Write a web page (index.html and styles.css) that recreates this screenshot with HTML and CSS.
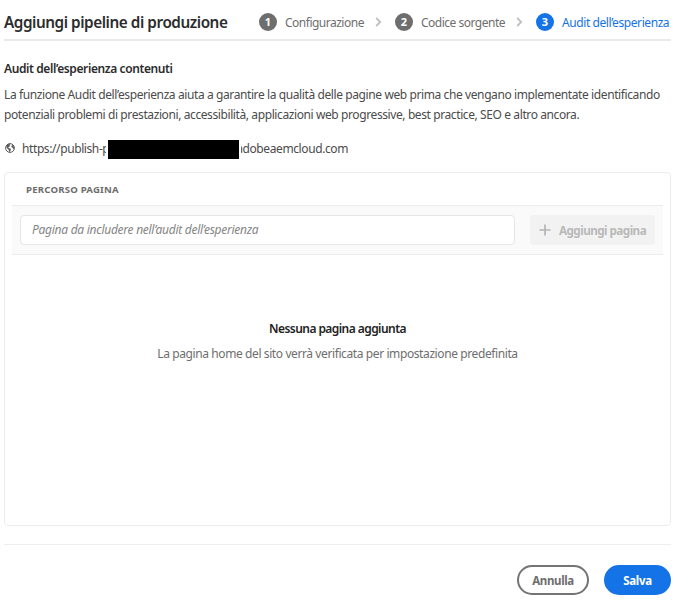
FILE: index.html
```
<!DOCTYPE html>
<html lang="it">
<head>
<meta charset="utf-8">
<title>Aggiungi pipeline di produzione</title>
<link rel="stylesheet" href="styles.css">
</head>
<body>
<main class="dialog">
  <header class="header">
    <h1 class="title">Aggiungi pipeline di produzione</h1>
    <ol class="steps">
      <li class="step step-one"><span class="badge">1</span><span class="label">Configurazione</span></li>
      <li class="chevron"><svg width="7" height="10" viewBox="0 0 7 10"><path d="M1.2 1 5.2 5 1.2 9"/></svg></li>
      <li class="step step-two"><span class="badge">2</span><span class="label">Codice sorgente</span></li>
      <li class="chevron"><svg width="7" height="10" viewBox="0 0 7 10"><path d="M1.2 1 5.2 5 1.2 9"/></svg></li>
      <li class="step active"><span class="badge">3</span><span class="label">Audit dell’esperienza</span></li>
    </ol>
  </header>
  <h2 class="subtitle">Audit dell’esperienza contenuti</h2>
  <p class="intro">La funzione Audit dell’esperienza aiuta a garantire la qualità delle pagine web prima che vengano implementate identificando<br>potenziali problemi di prestazioni, accessibilità, applicazioni web progressive, best practice, SEO e altro ancora.</p>
  <div class="url">
    <svg class="globe" width="10" height="10" viewBox="0 0 10 10"><circle cx="5" cy="5" r="4.4"/><path d="M1.2 2.8 2.4 1.3 4.6.9 5.4 2 4.3 3 4.5 4 3.1 4.3 3.9 5.2 5.6 5.6 5.9 6.8 4.8 8.9 4 8.6 3.7 6.8 2.2 5.6 1.6 4.2ZM6.6 1.2 8.6 2.9 9.2 5 8.4 6.4 7.7 4.8 6.5 4.2 6.3 3 7.2 2.3Z"/></svg>
    <span class="url-start">https://publish-p</span><span class="redacted"></span><span class="url-end"><span>adobeaemcloud.com</span></span>
  </div>
  <section class="panel">
    <div class="panel-head">Percorso pagina</div>
    <div class="add-row">
      <div class="field">Pagina da includere nell’audit dell’esperienza</div>
      <div class="add-button"><svg width="12" height="12" viewBox="0 0 12 12"><path d="M6 .5v11M.5 6h11"/></svg><span>Aggiungi pagina</span></div>
    </div>
    <div class="empty">
      <div class="empty-title">Nessuna pagina aggiunta</div>
      <div class="empty-text">La pagina home del sito verrà verificata per impostazione predefinita</div>
    </div>
  </section>
  <footer class="footer">
    <button class="button">Annulla</button>
    <button class="button primary">Salva</button>
  </footer>
</main>
</body>
</html>
```
FILE: styles.css
```
* { box-sizing: border-box; }
body {
  margin: 0;
  background: #fff;
  color: #4b4b4b;
  font: 12px/19px "Noto Sans", sans-serif;
  letter-spacing: -0.4px;
  white-space: nowrap;
}
.dialog { width: 667px; margin-left: 4px; }
.header {
  display: flex;
  justify-content: space-between;
  height: 41px;
  padding-top: 5px;
  border-bottom: 2px solid #eaeaea;
  align-items: center;
}
.title { margin: 0; font-size: 15.3px; font-weight: 600; letter-spacing: -0.45px; color: #2c2c2c; }
.steps { display: flex; align-items: center; margin: 0; padding: 0; list-style: none; }
.step { display: flex; align-items: center; gap: 8px; color: #6e6e6e; letter-spacing: -0.5px; }
.step-one { width: 105px; }
.step-two { width: 110px; }
.badge {
  flex: none;
  width: 18px;
  height: 18px;
  border-radius: 50%;
  background: #6e6e6e;
  color: #fff;
  font-size: 11px;
  font-weight: 700;
  line-height: 18px;
  text-align: center;
  letter-spacing: 0;
}
.active { width: 135px; color: #1473e6; letter-spacing: -0.42px; }
.active .badge { background: #1473e6; }
.chevron { display: flex; justify-content: center; width: 31px; padding-right: 3px; }
.chevron svg { fill: none; stroke: #c0c0c0; stroke-width: 1.8; }
.subtitle { margin: 18px 0 0; font-size: 12px; line-height: 20px; font-weight: 600; color: #2c2c2c; }
.intro { margin: 6px 0 0; line-height: 19.5px; }
.url { display: flex; align-items: center; height: 20px; margin-top: 14px; }
.globe { flex: none; margin: 0 7px 0 1px; fill: #5a5a5a; }
.globe circle { fill: none; stroke: #5a5a5a; stroke-width: 1; }
.url-start { width: 84px; overflow: hidden; }
.redacted { width: 131px; height: 19px; margin: 3px 2px 0 2px; background: #000; }
.url-end { display: flex; justify-content: flex-end; width: 107px; overflow: hidden; }
.panel {
  height: 354px;
  margin-top: 14px;
  padding: 0 7px;
  border: 1.5px solid #ececec;
  border-radius: 4px;
}
.panel-head {
  height: 32px;
  padding-left: 14px;
  color: #6e6e6e;
  font-size: 9.6px;
  font-weight: 700;
  line-height: 33px;
  letter-spacing: 0.2px;
  text-transform: uppercase;
}
.add-row {
  display: flex;
  align-items: center;
  justify-content: space-between;
  height: 50px;
  padding: 0 8px;
  border: solid #ececec;
  border-width: 1px 0;
  background: #fafafa;
}
.field {
  width: 495px;
  height: 30px;
  padding-left: 11px;
  border: 1px solid #e6e6e6;
  border-radius: 4px;
  background: #fff;
  color: #858585;
  font-style: italic;
  line-height: 28px;
  letter-spacing: -0.27px;
}
.add-button {
  display: flex;
  align-items: center;
  gap: 8px;
  width: 125px;
  height: 30px;
  padding-left: 9px;
  border-radius: 4px;
  background: #f2f2f2;
  color: #b9b9b9;
  font-size: 11.7px;
  font-weight: 700;
  letter-spacing: -0.55px;
}
.add-button svg { flex: none; stroke: #b5b5b5; stroke-width: 1.7; }
.empty { padding-top: 62px; text-align: center; }
.empty-title { color: #222; font-weight: 600; line-height: 24px; letter-spacing: -0.56px; }
.empty-text { color: #6e6e6e; line-height: 26px; }
.footer {
  display: flex;
  justify-content: flex-end;
  gap: 15px;
  margin-top: 18px;
  padding-top: 20px;
  border-top: 1px solid #eee;
}
.button {
  width: 72px;
  height: 30px;
  padding: 0;
  border: 2px solid #747474;
  border-radius: 15px;
  background: #fff;
  color: #6e6e6e;
  font: 700 11.5px "Noto Sans", sans-serif;
  letter-spacing: -0.35px;
}
.primary { width: 67px; border-color: #1473e6; background: #1473e6; color: #fff; }
```
